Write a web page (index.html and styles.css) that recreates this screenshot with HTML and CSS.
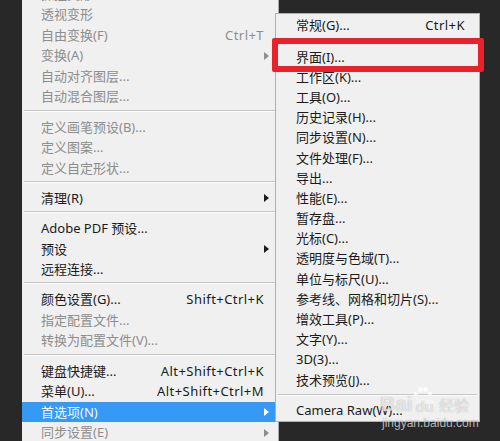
FILE: index.html
```html
<!DOCTYPE html>
<html lang="zh-CN">
<head>
    <meta charset="UTF-8">
    <title>首选项菜单</title>
    <link rel="stylesheet" href="styles.css">
</head>
<body>
    <div class="screen">
        <!-- 编辑菜单 -->
        <div class="menu main-menu">
            <div class="item off"><span class="label">操控变形</span></div>
            <div class="item off"><span class="label">透视变形</span></div>
            <div class="item off"><span class="label">自由变换(F)</span><span class="key">Ctrl+T</span></div>
            <div class="item off has-sub"><span class="label">变换(A)</span></div>
            <div class="item off"><span class="label">自动对齐图层...</span></div>
            <div class="item off"><span class="label">自动混合图层...</span></div>
            <div class="sep"></div>
            <div class="item off"><span class="label">定义画笔预设(B)...</span></div>
            <div class="item off"><span class="label">定义图案...</span></div>
            <div class="item off"><span class="label">定义自定形状...</span></div>
            <div class="sep"></div>
            <div class="item has-sub"><span class="label">清理(R)</span></div>
            <div class="sep"></div>
            <div class="item"><span class="label">Adobe PDF 预设...</span></div>
            <div class="item has-sub"><span class="label">预设</span></div>
            <div class="item"><span class="label">远程连接...</span></div>
            <div class="sep"></div>
            <div class="item"><span class="label">颜色设置(G)...</span><span class="key">Shift+Ctrl+K</span></div>
            <div class="item off"><span class="label">指定配置文件...</span></div>
            <div class="item off"><span class="label">转换为配置文件(V)...</span></div>
            <div class="sep"></div>
            <div class="item"><span class="label">键盘快捷键...</span><span class="key">Alt+Shift+Ctrl+K</span></div>
            <div class="item"><span class="label">菜单(U)...</span><span class="key">Alt+Shift+Ctrl+M</span></div>
            <div class="item active has-sub"><span class="label">首选项(N)</span></div>
            <div class="item off has-sub"><span class="label">同步设置(E)</span></div>
        </div>

        <!-- 首选项 子菜单 -->
        <div class="menu sub-menu">
            <div class="item"><span class="label">常规(G)...</span><span class="key">Ctrl+K</span></div>
            <div class="sep sep-first"></div>
            <div class="item"><span class="label">界面(I)...</span></div>
            <div class="item"><span class="label">工作区(K)...</span></div>
            <div class="item"><span class="label">工具(O)...</span></div>
            <div class="item"><span class="label">历史记录(H)...</span></div>
            <div class="item"><span class="label">同步设置(N)...</span></div>
            <div class="item"><span class="label">文件处理(F)...</span></div>
            <div class="item"><span class="label">导出...</span></div>
            <div class="item"><span class="label">性能(E)...</span></div>
            <div class="item"><span class="label">暂存盘...</span></div>
            <div class="item"><span class="label">光标(C)...</span></div>
            <div class="item"><span class="label">透明度与色域(T)...</span></div>
            <div class="item"><span class="label">单位与标尺(U)...</span></div>
            <div class="item"><span class="label">参考线、网格和切片(S)...</span></div>
            <div class="item"><span class="label">增效工具(P)...</span></div>
            <div class="item"><span class="label">文字(Y)...</span></div>
            <div class="item"><span class="label">3D(3)...</span></div>
            <div class="item"><span class="label">技术预览(J)...</span></div>
            <div class="sep"></div>
            <div class="item"><span class="label">Camera Raw(W)...</span></div>
        </div>

        <!-- 红色标注框 -->
        <div class="mark"></div>

        <!-- 水印 -->
        <div class="watermark">
            <div class="wm-logo">
                <span class="wm-bai">Bai</span>
                <span class="wm-du">
                    <svg class="wm-paw" width="20" height="12" viewBox="0 0 20 12">
                        <ellipse cx="3" cy="8" rx="2.2" ry="2.6"/>
                        <ellipse cx="7.5" cy="3.5" rx="2.3" ry="2.8"/>
                        <ellipse cx="12.5" cy="3.5" rx="2.3" ry="2.8"/>
                        <ellipse cx="17" cy="8" rx="2.2" ry="2.6"/>
                    </svg>du</span>
                <span class="wm-jy">经验</span>
            </div>
            <div class="wm-url">jingyan.baidu.com</div>
        </div>
    </div>
</body>
</html>
```

FILE: styles.css
```css
* {
    margin: 0;
    padding: 0;
    box-sizing: border-box;
}

body {
    background: #282828;
    font-family: 'Noto Sans', 'Noto Sans CJK SC', sans-serif;
    font-size: 13px;
    overflow: hidden;
}

.screen {
    position: relative;
    width: 500px;
    height: 441px;
    overflow: hidden;
    padding-left: 22px;
}

/* 菜单公共样式 */
.menu {
    background: #f0f0f0;
    color: #1b1b1b;
}

.item {
    position: relative;
    display: flex;
    align-items: center;
    height: 20.5px;
    line-height: 1;
    padding: 0 14px 0 19px;
    white-space: nowrap;
}

.item .label {
    flex: 1;
}

.item .key {
    letter-spacing: 0.45px;
}

.item.off {
    color: #8d8d8d;
}

.item.active {
    background: #3699f6;
    color: #f4f8ff;
}

/* 子菜单箭头 */
.has-sub::after {
    content: '';
    position: absolute;
    right: 9px;
    top: 50%;
    margin-top: -4px;
    border-left: 5px solid #1b1b1b;
    border-top: 4px solid transparent;
    border-bottom: 4px solid transparent;
}

.item.off.has-sub::after {
    border-left-color: #8d8d8d;
}

.item.active.has-sub::after {
    border-left-color: #ffffff;
}

.sep {
    height: 9.8px;
    padding-top: 2.5px;
    margin-left: 2px;
}

.sep::before {
    content: '';
    display: block;
    border-top: 1px solid #c6c6c6;
    border-bottom: 1px solid #fbfbfb;
}

/* 左侧编辑菜单 */
.main-menu {
    width: 257px;
    margin-top: -16px;
    height: 470px;
    border-right: 1px solid #a8a8a8;
}

/* 首选项子菜单 */
.sub-menu {
    position: absolute;
    left: 275px;
    top: 13px;
    width: 205px;
    padding: 1px 0;
    border: 1px solid #b0b0b0;
    z-index: 2;
}

.sub-menu .item {
    height: 20.2px;
    padding: 0 14px 0 20px;
}

.sub-menu .sep {
    height: 10px;
    padding-top: 4px;
    margin: 0 2px;
}

.sub-menu .sep-first {
    height: 11.8px;
}

/* 红色标注框 */
.mark {
    position: absolute;
    left: 272px;
    top: 38px;
    width: 212px;
    height: 34px;
    border: 6px solid #e8212b;
    border-radius: 2px;
    z-index: 3;
}

/* 百度经验水印 */
.watermark {
    position: absolute;
    left: 380px;
    top: 384px;
    color: rgba(255, 255, 255, 0.72);
    text-shadow: 0 0 1px rgba(0, 0, 0, 0.35);
    z-index: 4;
}

.wm-logo {
    display: flex;
    align-items: flex-end;
    height: 30px;
}

.wm-bai {
    font-family: 'Liberation Sans', sans-serif;
    font-weight: bold;
    font-size: 21px;
    line-height: 1;
}

.wm-du {
    position: relative;
    font-family: 'Liberation Sans', sans-serif;
    font-weight: bold;
    font-size: 15px;
    line-height: 1;
    margin-left: 2px;
    padding: 0 1px;
    border-radius: 6px 6px 8px 8px;
    background: rgba(255, 255, 255, 0.25);
}

.wm-paw {
    position: absolute;
    left: -2px;
    top: -13px;
    fill: rgba(255, 255, 255, 0.7);
}

.wm-jy {
    font-family: 'Noto Sans CJK SC', sans-serif;
    font-size: 15px;
    line-height: 1;
    margin-left: 4px;
    margin-bottom: 2px;
}

.wm-url {
    font-family: 'Liberation Sans', sans-serif;
    font-size: 12px;
    margin-top: 2px;
    margin-left: 2px;
    color: rgba(230, 230, 230, 0.75);
}
```
